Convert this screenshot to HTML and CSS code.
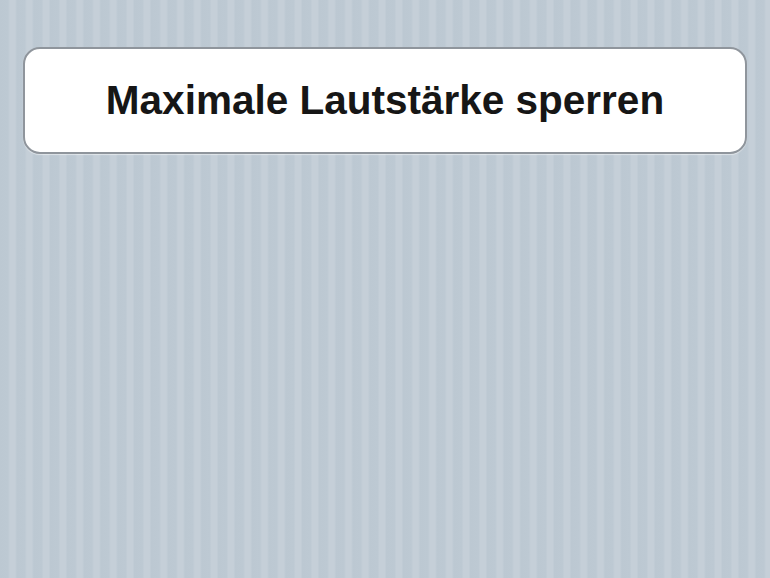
FILE: index.html
```html
<!DOCTYPE html>
<html>
<head>
<meta charset="utf-8">
<link rel="stylesheet" href="styles.css">
</head>
<body>
<div class="screen">
  <button class="action">Maximale Lautstärke sperren</button>
</div>
</body>
</html>
```

FILE: styles.css
```css
html, body {
  margin: 0;
  padding: 0;
}
.screen {
  width: 770px;
  height: 578px;
  box-sizing: border-box;
  padding: 47px 23px 0 23px;
  background-color: #bcc8d2;
  background-image: repeating-linear-gradient(90deg, #bcc8d2 0px, #bdc9d3 8px, #c5cfd8 10px, #c5cfd8 15px, #bdc9d3 16.8px);
}
.action {
  display: flex;
  align-items: center;
  justify-content: center;
  width: 724px;
  height: 107px;
  box-sizing: border-box;
  background: #ffffff;
  border: 2px solid #8f959c;
  border-radius: 17px;
  font-family: "Liberation Sans", Arial, sans-serif;
  font-weight: bold;
  font-size: 40.5px;
  color: #161616;
  padding: 0 0 1px 0;
  box-shadow: 0 1px 1px rgba(255,255,255,0.5);
}
```
